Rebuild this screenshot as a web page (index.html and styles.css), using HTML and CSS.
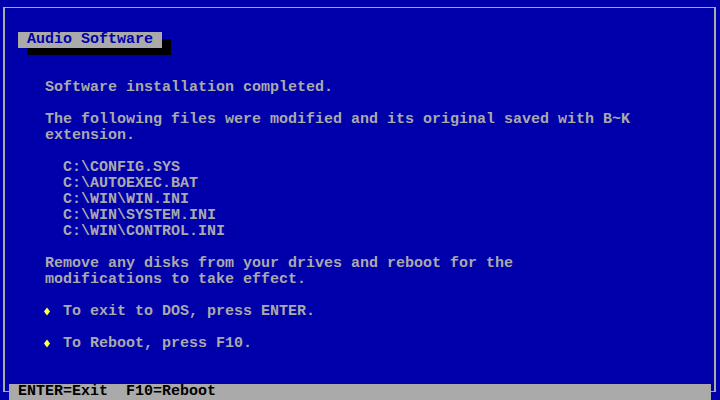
FILE: index.html
```html
<!DOCTYPE html>
<html>
<head>
<meta charset="utf-8">
<link rel="stylesheet" href="styles.css">
</head>
<body>
<div class="screen">
  <div class="frame">
    <div class="title">Audio Software</div>
    <div class="content">
      <p class="para">Software installation completed.</p>
      <p class="para">The following files were modified and its original saved with B~K<br>extension.</p>
      <ul class="files">
        <li>C:\CONFIG.SYS</li>
        <li>C:\AUTOEXEC.BAT</li>
        <li>C:\WIN\WIN.INI</li>
        <li>C:\WIN\SYSTEM.INI</li>
        <li>C:\WIN\CONTROL.INI</li>
      </ul>
      <p class="para">Remove any disks from your drives and reboot for the<br>modifications to take effect.</p>
      <p class="para opt"><span class="bullet"><svg width="9" height="16" viewBox="0 0 9 16"><polygon points="2,3.5 5,7.5 2,11.5 -1,7.5" fill="#FFFF55"/></svg></span>To exit to DOS, press ENTER.</p>
      <p class="para opt"><span class="bullet"><svg width="9" height="16" viewBox="0 0 9 16"><polygon points="2,3.5 5,7.5 2,11.5 -1,7.5" fill="#FFFF55"/></svg></span>To Reboot, press F10.</p>
    </div>
  </div>
  <div class="status">ENTER=Exit  F10=Reboot</div>
</div>
</body>
</html>
```
FILE: styles.css
```css
html, body {
  margin: 0;
  padding: 0;
  background: #0000AA;
}

.screen {
  position: relative;
  width: 720px;
  height: 400px;
  box-sizing: border-box;
  padding: 7px 0 0 3px;
  background: #0000AA;
  color: #AAAAAA;
  font-family: "Liberation Mono", monospace;
  font-size: 15px;
  line-height: 16px;
  font-weight: bold;
  overflow: hidden;
}

.frame {
  width: 713px;
  height: 385px;
  box-sizing: border-box;
  border-style: solid;
  border-color: #AAAAAA;
  border-width: 1px 2px;
  padding: 24px 0 0 13px;
}

.title {
  display: inline-block;
  padding: 0 9px;
  height: 16px;
  background: #AAAAAA;
  color: #0000AA;
  box-shadow: 9px 7px 0 #000000;
  white-space: pre;
}

.content {
  margin: 32px 0 0 27px;
  display: flex;
  flex-direction: column;
  gap: 16px;
}

.para {
  margin: 0;
  white-space: nowrap;
}

.files {
  list-style: none;
  margin: 0;
  padding: 0 0 0 18px;
}

.files li {
  height: 16px;
}

.opt {
  display: flex;
  align-items: flex-start;
}

.bullet {
  display: inline-block;
  width: 18px;
  height: 16px;
  flex: none;
}

.bullet svg {
  display: block;
  overflow: visible;
}

.status {
  position: absolute;
  left: 9px;
  top: 384px;
  width: 702px;
  height: 16px;
  box-sizing: border-box;
  padding-left: 9px;
  background: #AAAAAA;
  color: #000000;
  white-space: pre;
}
```
